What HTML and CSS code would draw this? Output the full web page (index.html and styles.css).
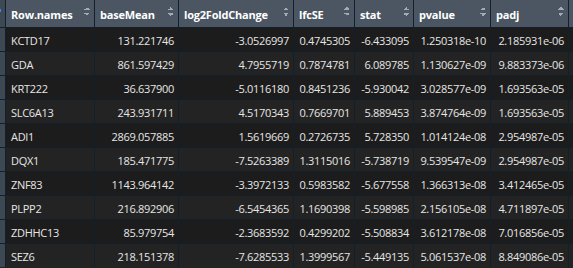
FILE: index.html
```html
<!DOCTYPE html>
<html>
<head>
<meta charset="utf-8">
<link rel="stylesheet" href="styles.css">
</head>
<body>
<div class="grid">
  <div class="hd strip"><span class="tick"></span></div>
  <div class="hd"><span class="lbl">Row.names</span><i class="sort"></i></div>
  <div class="hd"><span class="lbl">baseMean</span><i class="sort"></i></div>
  <div class="hd"><span class="lbl">log2FoldChange</span><i class="sort"></i></div>
  <div class="hd"><span class="lbl">lfcSE</span><i class="sort"></i></div>
  <div class="hd"><span class="lbl">stat</span><i class="sort"></i></div>
  <div class="hd"><span class="lbl">pvalue</span><i class="sort"></i></div>
  <div class="hd"><span class="lbl">padj</span><i class="sort"></i></div>
  <div class="hd"></div>

  <div class="strip"></div><div class="c o name">KCTD17</div><div class="c o">131.221746</div><div class="c o">-3.0526997</div><div class="c o">0.4745305</div><div class="c o">-6.433095</div><div class="c o">1.250318e-10</div><div class="c o">2.185931e-06</div><div class="c o"></div>
  <div class="strip"></div><div class="c e name">GDA</div><div class="c e">861.597429</div><div class="c e">4.7955719</div><div class="c e">0.7874781</div><div class="c e">6.089785</div><div class="c e">1.130627e-09</div><div class="c e">9.883373e-06</div><div class="c e"></div>
  <div class="strip"></div><div class="c o name">KRT222</div><div class="c o">36.637900</div><div class="c o">-5.0116180</div><div class="c o">0.8451236</div><div class="c o">-5.930042</div><div class="c o">3.028577e-09</div><div class="c o">1.693563e-05</div><div class="c o"></div>
  <div class="strip"></div><div class="c e name">SLC6A13</div><div class="c e">243.931711</div><div class="c e">4.5170343</div><div class="c e">0.7669701</div><div class="c e">5.889453</div><div class="c e">3.874764e-09</div><div class="c e">1.693563e-05</div><div class="c e"></div>
  <div class="strip"></div><div class="c o name">ADI1</div><div class="c o">2869.057885</div><div class="c o">1.5619669</div><div class="c o">0.2726735</div><div class="c o">5.728350</div><div class="c o">1.014124e-08</div><div class="c o">2.954987e-05</div><div class="c o"></div>
  <div class="strip"></div><div class="c e name">DQX1</div><div class="c e">185.471775</div><div class="c e">-7.5263389</div><div class="c e">1.3115016</div><div class="c e">-5.738719</div><div class="c e">9.539547e-09</div><div class="c e">2.954987e-05</div><div class="c e"></div>
  <div class="strip"></div><div class="c o name">ZNF83</div><div class="c o">1143.964142</div><div class="c o">-3.3972133</div><div class="c o">0.5983582</div><div class="c o">-5.677558</div><div class="c o">1.366313e-08</div><div class="c o">3.412465e-05</div><div class="c o"></div>
  <div class="strip"></div><div class="c e name">PLPP2</div><div class="c e">216.892906</div><div class="c e">-6.5454365</div><div class="c e">1.1690398</div><div class="c e">-5.598985</div><div class="c e">2.156105e-08</div><div class="c e">4.711897e-05</div><div class="c e"></div>
  <div class="strip"></div><div class="c o name">ZDHHC13</div><div class="c o">85.979754</div><div class="c o">-2.3683592</div><div class="c o">0.4299202</div><div class="c o">-5.508834</div><div class="c o">3.612178e-08</div><div class="c o">7.016856e-05</div><div class="c o"></div>
  <div class="strip"></div><div class="c e name">SEZ6</div><div class="c e">218.151378</div><div class="c e">-7.6285533</div><div class="c e">1.3999567</div><div class="c e">-5.449135</div><div class="c e">5.061537e-08</div><div class="c e">8.849086e-05</div><div class="c e"></div>
</div>
</body>
</html>
```
FILE: styles.css
```css
html, body {
  margin: 0;
  padding: 0;
  background: #232323;
}
.grid {
  display: grid;
  grid-template-columns: 5px 88px 83px 114px 60px 58px 76px 77px 1fr;
  grid-template-rows: 27px repeat(10, 23px);
  gap: 1px;
  background: #12202d;
  width: 573px;
  font-family: "Open Sans", "Noto Sans", sans-serif;
  font-size: 11px;
}
.hd {
  background: #4b5662;
  color: #ffffff;
  font-weight: bold;
  font-size: 11px;
  letter-spacing: -0.2px;
  padding: 0 4px 0 5px;
  position: relative;
}
.lbl {
  display: block;
  padding-top: 6px;
  line-height: 17px;
}
.hd.strip {
  padding: 0;
}
.strip {
  background: #3e4853;
}
.tick {
  position: absolute;
  left: 0;
  top: 9px;
  width: 1px;
  height: 3px;
  background: #2a8cff;
}
.sort {
  position: absolute;
  right: 4px;
  top: 7px;
  width: 6px;
  height: 9px;
  background:
    linear-gradient(to bottom right, transparent 50%, #a3acb5 50%) 0 0 / 3px 3px no-repeat,
    linear-gradient(to bottom left, transparent 50%, #a3acb5 50%) 3px 0 / 3px 3px no-repeat,
    linear-gradient(to top right, transparent 50%, #a3acb5 50%) 0 6px / 3px 3px no-repeat,
    linear-gradient(to top left, transparent 50%, #a3acb5 50%) 3px 6px / 3px 3px no-repeat;
}
.c {
  color: #e6e6e6;
  text-align: right;
  padding: 0 4px 0 5px;
  line-height: 25px;
  letter-spacing: -0.3px;
  white-space: nowrap;
  overflow: hidden;
}
.c.name {
  text-align: left;
}
.o {
  background: #1c1c1c;
}
.e {
  background: #232323;
}
```
